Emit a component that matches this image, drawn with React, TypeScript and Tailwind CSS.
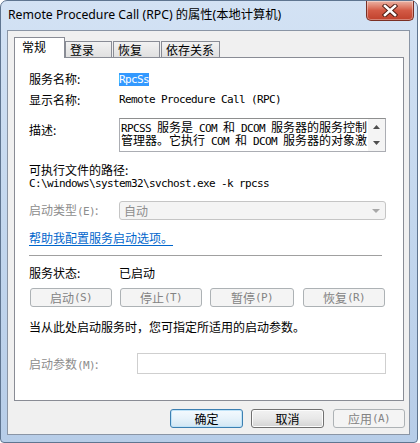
const cjk = "font-['Noto_Sans_CJK_SC',sans-serif]";
const mono = "font-['DejaVu_Sans_Mono','Noto_Sans_CJK_SC',monospace] text-[11px] tracking-[-0.62px]";

function M({ children }: { children: React.ReactNode }) {
  return <span className={mono}>{children}</span>;
}

function CloseButton() {
  return (
    <div className="flex h-[20px] w-[48px] items-center justify-center rounded-b-[5px] border border-t-0 border-[#7a2f24] bg-linear-to-b from-[#eab3a5] via-[#d35a45] to-[#c0412c] shadow-[inset_0_0_0_1px_rgba(255,255,255,0.35)]">
      <svg width="16" height="13" viewBox="0 0 16 13">
        <path d="M3 2 L13 11 M13 2 L3 11" stroke="#4a1a12" strokeWidth="4.4" strokeLinecap="square" />
        <path d="M3 2 L13 11 M13 2 L3 11" stroke="#ffffff" strokeWidth="2.6" strokeLinecap="square" />
      </svg>
    </div>
  );
}

function Tab({ label, active }: { label: string; active?: boolean }) {
  if (active) {
    return (
      <div className="relative z-10 -mb-px flex h-[21px] w-[51px] items-start border border-b-0 border-[#898c95] bg-white pl-[7px] pt-[2px] leading-[14px]">
        {label}
      </div>
    );
  }
  return (
    <div className="flex h-[16px] items-center border border-b-0 border-[#898c95] bg-linear-to-b from-[#f2f2f2] to-[#e0e0e0] pl-[4px] leading-[14px]">
      {label}
    </div>
  );
}

function DisabledButton({ w, children }: { w: string; children: React.ReactNode }) {
  return (
    <div className={`flex h-[19px] ${w} items-center justify-center rounded-[3px] border border-[#adb2b5] bg-[#f4f4f4] leading-[14px] text-[#838383]`}>
      {children}
    </div>
  );
}

export default function App() {
  return (
    <div className={`h-[443px] w-[420px] overflow-hidden bg-white text-[12px] text-black ${cjk}`}>
      <div className="flex h-[443px] w-[418px] flex-col rounded-t-[7px] rounded-b-[4px] border border-[#5f7590] bg-linear-to-b from-[#d3e2f4] via-[#c3d7ee] to-[#b7cde8]">
        {/* title bar */}
        <div className="flex h-[29px] justify-between pl-[7px] pr-[3px]">
          <div className="flex items-center pb-[1px] pt-[1px] font-['Noto_Sans','Noto_Sans_CJK_SC',sans-serif] text-[12.25px] text-black">
            Remote Procedure Call (RPC) 的属性(本地计算机)
          </div>
          <CloseButton />
        </div>

        {/* client area */}
        <div className="ml-[6px] flex h-[405px] w-[403px] flex-col border border-[#8a95a5] bg-[#f0f0f0]">
          <div className="ml-[6px] mt-[6px] flex h-[20px] items-end">
            <Tab label="常规" active />
            <div className="w-[47px]">
              <Tab label="登录" />
            </div>
            <div className="ml-px w-[47px]">
              <Tab label="恢复" />
            </div>
            <div className="ml-px w-[59px]">
              <Tab label="依存关系" />
            </div>
          </div>

          {/* tab panel */}
          <div className="ml-[6px] flex h-[344px] w-[390px] flex-col border border-[#898c95] bg-white pl-[14px] leading-[14px]">
            <div className="mt-[14px] flex h-[14px] items-center">
              <div className="w-[90px]">服务名称:</div>
              <span className={`${mono} bg-[#3399ff] leading-[13px] text-white`}>RpcSs</span>
            </div>
            <div className="mt-[7px] flex h-[14px] items-center">
              <div className="w-[90px]">显示名称:</div>
              <span className={mono}>Remote Procedure Call (RPC)</span>
            </div>

            <div className="mt-[11px] flex h-[34px]">
              <div className="w-[90px] pt-[5px]">描述:</div>
              <div className="flex w-[267px] border border-[#abadb3] border-t-[#8e8f8f]">
                <div className="flex-1 overflow-hidden whitespace-pre pl-px pt-px leading-[13px]">
                  <div className="h-[13px]">
                    <M>RPCSS </M>服务是<M> COM </M>和<M> DCOM </M>服务器的服务控制
                  </div>
                  <div className="h-[13px]">
                    管理器。它执行<M> COM </M>和<M> DCOM </M>服务器的对象激
                  </div>
                </div>
                <div className="flex w-[17px] flex-col items-center justify-between bg-[#f4f4f4] py-[6px]">
                  <svg width="7" height="4" viewBox="0 0 7 4">
                    <path d="M0 4 L3.5 0 L7 4 Z" fill="#4d4d4d" />
                  </svg>
                  <svg width="7" height="4" viewBox="0 0 7 4">
                    <path d="M0 0 L7 0 L3.5 4 Z" fill="#4d4d4d" />
                  </svg>
                </div>
              </div>
            </div>

            <div className="mt-[11px] h-[14px]">可执行文件的路径:</div>
            <div className={`h-[14px] ${mono} leading-[14px]`}>C:\windows\system32\svchost.exe -k rpcss</div>

            <div className="mt-[10px] flex h-[19px] items-center">
              <div className="w-[90px] text-[#8d8d8d]">
                启动类型<M>(E)</M>:
              </div>
              <div className="flex h-[19px] w-[267px] items-center justify-between rounded-[3px] border border-[#c5c5c5] bg-[#f4f4f4] pl-[4px] pr-[5px] text-[#8d8d8d]">
                <span>自动</span>
                <svg width="8" height="4" viewBox="0 0 8 4">
                  <path d="M0 0 L8 0 L4 4 Z" fill="#a8a8a8" />
                </svg>
              </div>
            </div>

            <div className="mt-[11px] h-[14px]">
              <span className="text-[#0066cc] underline underline-offset-2">帮助我配置服务启动选项。</span>
            </div>

            <div className="mt-[10px] h-px w-[353px] bg-[#a0a0a0]" />

            <div className="mt-[10px] flex h-[14px] items-center">
              <div className="w-[90px]">服务状态:</div>
              <div>已启动</div>
            </div>

            <div className="ml-px mt-[8px] flex">
              <DisabledButton w="w-[82px]">
                启动<M>(S)</M>
              </DisabledButton>
              <div className="ml-[8px]">
                <DisabledButton w="w-[82px]">
                  停止<M>(T)</M>
                </DisabledButton>
              </div>
              <div className="ml-[8px]">
                <DisabledButton w="w-[84px]">
                  暂停<M>(P)</M>
                </DisabledButton>
              </div>
              <div className="ml-[9px]">
                <DisabledButton w="w-[82px]">
                  恢复<M>(R)</M>
                </DisabledButton>
              </div>
            </div>

            <div className="mt-[13px] h-[14px]">当从此处启动服务时，您可指定所适用的启动参数。</div>

            <div className="mt-[19px] flex h-[21px] items-center">
              <div className="w-[108px] pt-[3px] text-[#8d8d8d]">
                启动参数<M>(M)</M>:
              </div>
              <div className="h-[21px] w-[249px] border border-[#cfcfcf] bg-white" />
            </div>
          </div>

          {/* bottom buttons */}
          <div className="ml-[162px] mt-[8px] flex">
            <div className="flex h-[19px] w-[73px] items-center justify-center rounded-[3px] border border-[#3c7fb1] bg-linear-to-b from-[#f4fafe] via-[#e6f2fa] to-[#d2e6f3] leading-[14px] shadow-[inset_0_0_0_1px_#bfe3f8]">
              确定
            </div>
            <div className="ml-[8px] flex h-[19px] w-[73px] items-center justify-center rounded-[3px] border border-[#707070] bg-linear-to-b from-[#f2f2f2] via-[#e8e8e8] to-[#d3d3d3] leading-[14px] shadow-[inset_0_0_0_1px_#fcfcfc]">
              取消
            </div>
            <div className="ml-[9px] flex h-[19px] w-[72px] items-center justify-center rounded-[3px] border border-[#adb2b5] bg-[#f4f4f4] leading-[14px] text-[#838383]">
              应用<M>(A)</M>
            </div>
          </div>
        </div>
      </div>
    </div>
  );
}
